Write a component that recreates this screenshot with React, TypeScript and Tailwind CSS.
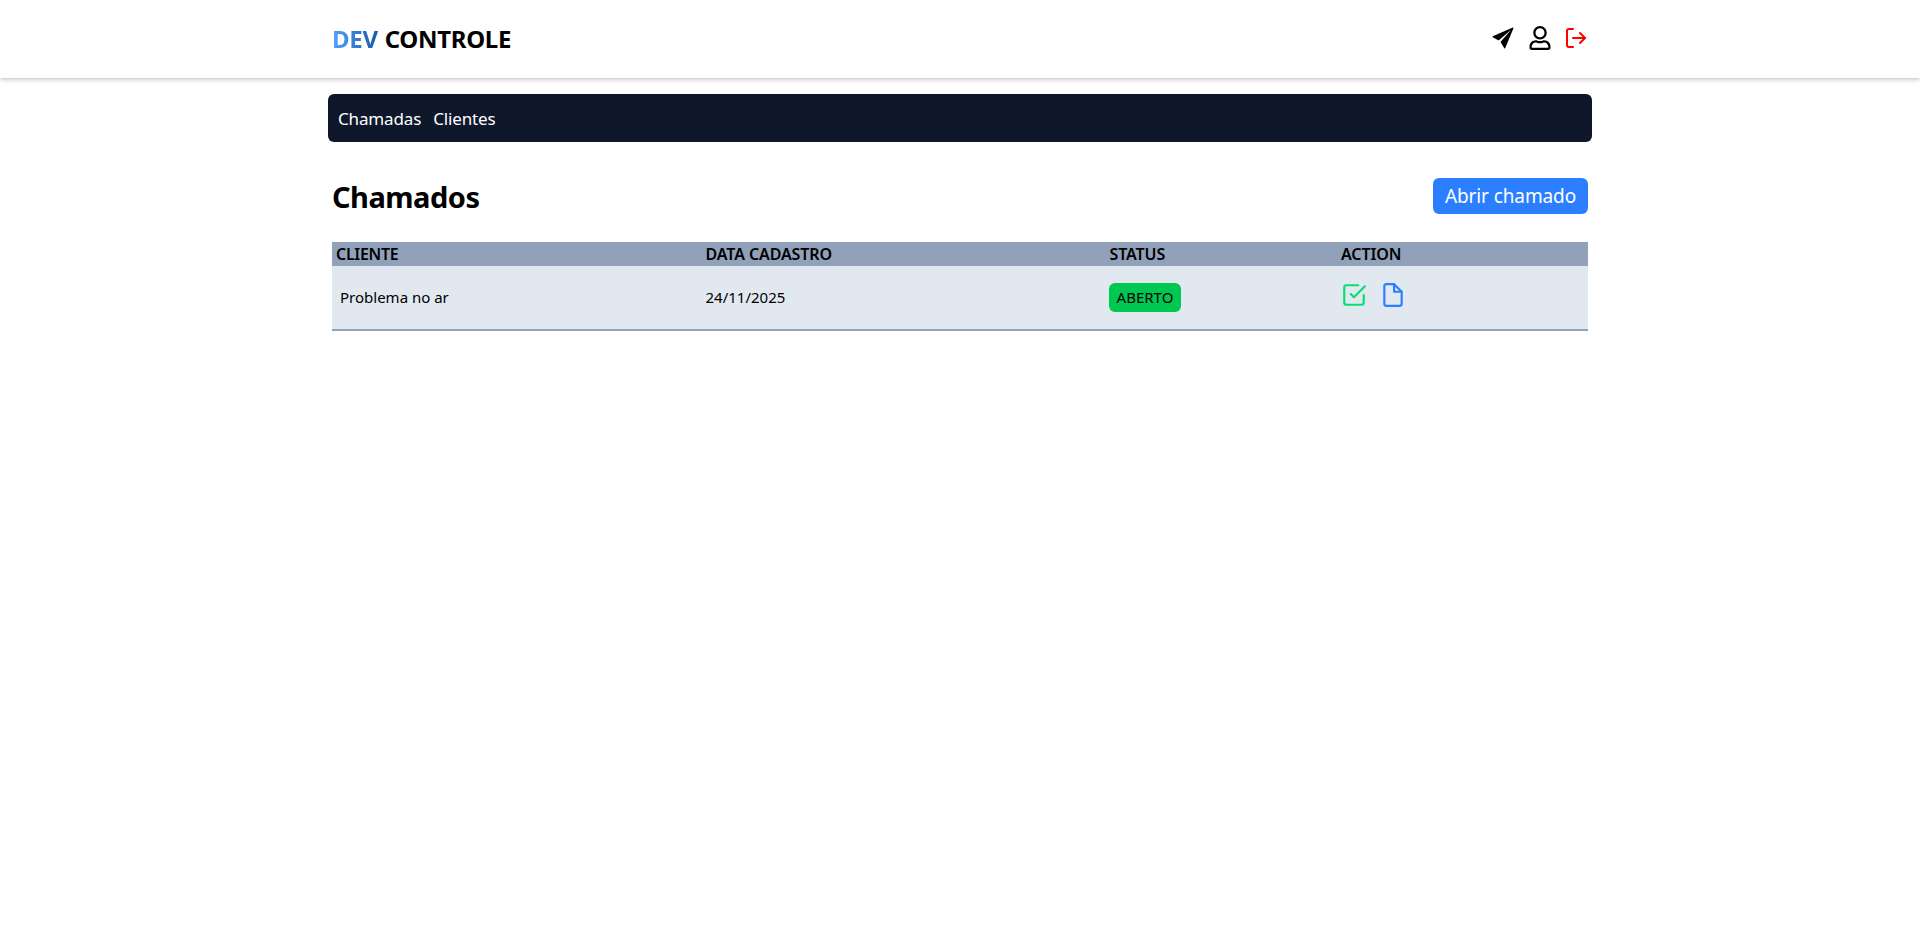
import { FaRegUser } from "react-icons/fa";
import { FiCheckSquare, FiFile, FiLogOut } from "react-icons/fi";
import { IoIosSend } from "react-icons/io";

export default function App() {
  return (
    <div className="min-h-[950px] bg-white text-black font-['Noto_Sans','Open_Sans',sans-serif]">
      <header className="h-[78px] bg-white shadow-[0_2px_4px_rgba(0,0,0,0.2)] flex items-center">
        <div className="w-[1280px] mx-auto px-3 flex items-center justify-between">
          <a className="text-2xl font-bold leading-8 tracking-[-0.3px]">
            <span className="bg-gradient-to-r from-[#51a2ff] to-[#1c5aa8] bg-clip-text text-transparent">DEV</span>{" "}
            <span className="ml-[1px]">CONTROLE</span>
          </a>
          <div className="flex items-center gap-3 h-6 -translate-y-[1px]">
            <IoIosSend size={28} className="-mr-[1px]" />
            <FaRegUser size={24} />
            <FiLogOut size={24} color="#ff0000" />
          </div>
        </div>
      </header>
      <main className="w-[1280px] mx-auto px-2">
        <nav className="mt-4 h-12 bg-slate-900 rounded-md px-[10px] flex items-center gap-3 text-white text-[17px] tracking-[-0.15px]">
          <span className="translate-y-[0.5px]">Chamadas</span>
          <span className="translate-y-[0.5px]">Clientes</span>
        </nav>
        <div className="px-1">
          <div className="mt-9 flex items-center justify-between h-9">
            <h1 className="text-[29px] font-bold tracking-[-0.5px] pt-[1px]">Chamados</h1>
            <button className="h-9 w-[155px] pt-[1px] bg-blue-500 text-white text-[19px] tracking-[-0.1px] rounded-md">Abrir chamado</button>
          </div>
          <table className="mt-7 w-full table-fixed border-collapse text-left">
            <thead>
              <tr className="h-6 bg-slate-400 text-base">
                <th className="w-[373px] pl-1 font-semibold uppercase tracking-[-0.3px]">Cliente</th>
                <th className="w-[404px] pl-[0.5px] font-semibold uppercase tracking-[-0.1px]">Data cadastro</th>
                <th className="w-[231px] pl-[0.5px] font-semibold uppercase tracking-[-0.1px]">Status</th>
                <th className="pl-[1px] font-semibold uppercase tracking-[-0.1px]">Action</th>
              </tr>
            </thead>
            <tbody>
              <tr className="h-[64px] bg-slate-200 border-b-2 border-slate-400 text-[15px]">
                <td className="pl-2">Problema no ar</td>
                <td className="pl-[0.5px]">24/11/2025</td>
                <td>
                  <span className="inline-block w-[72px] text-center h-[29px] leading-[29px] bg-green-500 rounded-md font-normal">ABERTO</span>
                </td>
                <td>
                  <div className="flex items-center gap-[13px] pl-[1px] pb-[6px]">
                    <FiCheckSquare size={26} color="#05df72" />
                    <FiFile size={26} color="#2b7fff" />
                  </div>
                </td>
              </tr>
            </tbody>
          </table>
        </div>
      </main>
    </div>
  );
}
